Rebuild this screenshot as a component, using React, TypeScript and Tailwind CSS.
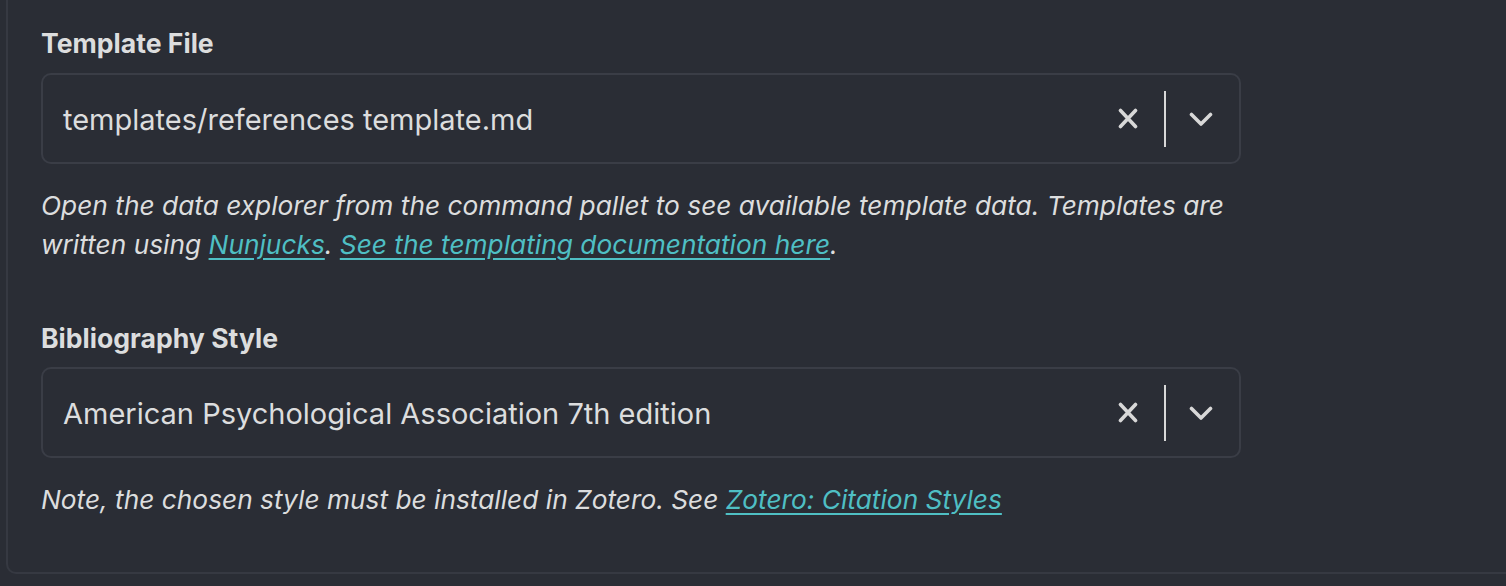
const font = { fontFamily: "Inter, 'Noto Sans', sans-serif" };

function SelectBox({ value }: { value: string }) {
  return (
    <div className="flex h-[91px] w-[1200px] items-center rounded-[10px] border-2 border-[#3a3d46] bg-[#2a2d35]">
      <div className="flex-1 pl-[20px] pt-[2px] text-[29px] text-[#dcddde]">{value}</div>
      <div className="flex items-center">
        {/* clear */}
        <svg width="20" height="21" viewBox="0 0 20 21" className="mr-[26px] text-[#d8d8d8]">
          <path d="M2.5 2.5 L17.5 18.5 M17.5 2.5 L2.5 18.5" stroke="currentColor" strokeWidth="3.6" strokeLinecap="round" fill="none" />
        </svg>
        <div className="h-[56px] w-[2px] bg-[#d8d8d8]" />
        {/* dropdown */}
        <svg width="24" height="15" viewBox="0 0 24 15" className="ml-[23px] mr-[26px] mt-[2px] text-[#d8d8d8]">
          <path d="M2.5 2.5 L12 12 L21.5 2.5" stroke="currentColor" strokeWidth="3.6" strokeLinecap="round" strokeLinejoin="round" fill="none" />
        </svg>
      </div>
    </div>
  );
}

export default function App() {
  return (
    <div className="h-[586px] w-full overflow-hidden bg-[#2a2d35]" style={font}>
      <div className="ml-[6px] h-[574px] rounded-bl-[10px] border-b-2 border-l-2 border-[#363942] pl-[33px] pt-[27px]">
        {/* Template file */}
        <div className="text-[26.6px] font-bold leading-[32px] text-[#dcddde]">Template File</div>
        <div className="mt-[14px]">
          <SelectBox value="templates/references template.md" />
        </div>
        <p className="mt-[22px] w-[1200px] text-[26.3px] italic leading-[39px] text-[#dcddde]">
          Open the data explorer from the command pallet to see available template data. Templates are written using{" "}
          <a className="text-[#4fbfc4] underline underline-offset-[4px]">Nunjucks</a>.{" "}
          <a className="text-[#4fbfc4] underline underline-offset-[4px]">See the templating documentation here</a>.
        </p>

        {/* Bibliography style */}
        <div className="mt-[58px] text-[26.6px] font-bold leading-[32px] text-[#dcddde]">Bibliography Style</div>
        <div className="mt-[13px]">
          <SelectBox value="American Psychological Association 7th edition" />
        </div>
        <p className="mt-[22px] text-[26.3px] italic leading-[39px] text-[#dcddde]">
          Note, the chosen style must be installed in Zotero. See{" "}
          <a className="text-[#4fbfc4] underline underline-offset-[4px]">Zotero: Citation Styles</a>
        </p>
      </div>
    </div>
  );
}
